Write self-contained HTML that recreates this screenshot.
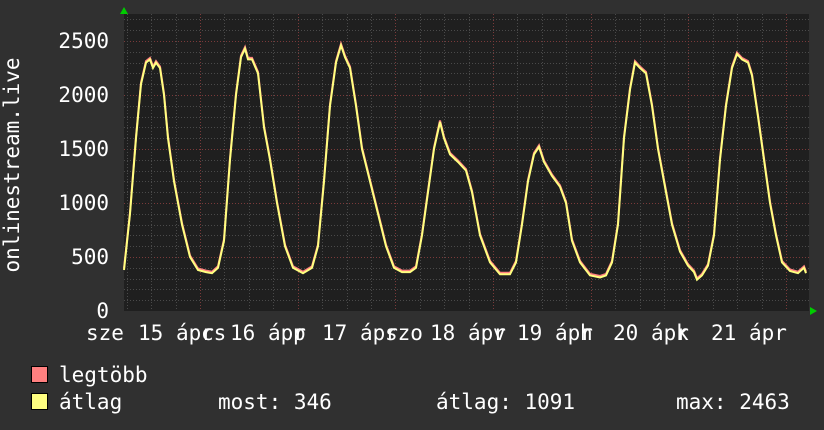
<!DOCTYPE html>
<html><head><meta charset="utf-8"><style>
html,body{margin:0;padding:0;background:#303030;}
svg{display:block}
text{font-family:"DejaVu Sans Mono","Liberation Mono",monospace;font-size:21px;fill:#fff}
</style></head><body>
<svg id="s" width="824" height="430" xmlns="http://www.w3.org/2000/svg">
<rect width="824" height="430" fill="#303030"/>
<rect x="124" y="14" width="685" height="297" fill="#1f1f1f"/>
<g id="grid"></g>
<polygon points="120,14 128,14 124,7" fill="#00cc00"/>
<polygon points="810,307 810,315 817,311" fill="#00cc00"/>
<g text-anchor="end">
<text x="109" y="48">2500</text>
<text x="109" y="102">2000</text>
<text x="109" y="156">1500</text>
<text x="109" y="210">1000</text>
<text x="109" y="264">500</text>
<text x="109" y="318">0</text>
</g>
<text transform="translate(19,165) rotate(-90)" text-anchor="middle">onlinestream.live</text>
<g id="xl"></g>
<rect x="31.5" y="366.5" width="16" height="16" fill="#ff8080" stroke="#000"/>
<rect x="31.5" y="393.5" width="16" height="16" fill="#ffff80" stroke="#000"/>
<text x="59" y="382">legtöbb</text>
<text x="59" y="409">átlag</text>
<text x="218" y="409">most: 346</text>
<text x="436" y="409">átlag: 1091</text>
<text x="676" y="409">max: 2463</text>
<polyline id="p1" fill="none" stroke="#ff8080" stroke-width="2"/>
<polyline id="p2" fill="none" stroke="#ffff80" stroke-width="2"/>
</svg>
<script>
var NS="http://www.w3.org/2000/svg",g=document.getElementById('grid');
function ln(x1,y1,x2,y2,c){var l=document.createElementNS(NS,'line');l.setAttribute('x1',x1);l.setAttribute('y1',y1);l.setAttribute('x2',x2);l.setAttribute('y2',y2);l.setAttribute('stroke',c);l.setAttribute('stroke-width',1);l.setAttribute('stroke-dasharray','1,2');g.appendChild(l);}
for(var v=100;v<=2700;v+=100){var y=Math.round(311-v*0.108)+0.5;ln(124,y,809,y,v%500==0?'#7a3a3a':'#4a4a4a');}
for(var k=-3;k<30;k++){var x=200+k*24.42;if(x<125||x>808)continue;x=Math.round(x)+0.5;ln(x,14,x,311,k%4==0?'#7a3a3a':'#4a4a4a');}
var pts=[[124,380],[130,900],[136,1600],[141,2100],[146,2300],[150,2330],[153,2250],[156,2300],[160,2250],[164,2000],[168,1600],[174,1200],[182,800],[190,500],[198,380],[206,360],[212,350],[218,400],[224,650],[230,1400],[236,2000],[241,2350],[245,2430],[248,2330],[252,2330],[258,2200],[264,1700],[270,1400],[277,1000],[285,600],[293,400],[303,350],[312,400],[318,600],[324,1200],[330,1900],[336,2300],[341,2460],[345,2350],[350,2250],[356,1900],[362,1500],[370,1200],[378,900],[386,600],[394,400],[402,360],[410,360],[416,400],[422,700],[428,1100],[434,1500],[440,1750],[444,1600],[450,1450],[458,1380],[466,1300],[472,1100],[480,700],[490,450],[500,340],[510,340],[516,450],[522,800],[528,1200],[534,1450],[539,1520],[544,1380],[552,1250],[560,1150],[566,1000],[572,650],[580,450],[590,330],[600,310],[606,330],[612,450],[618,800],[624,1600],[630,2050],[635,2300],[640,2250],[646,2200],[652,1900],[658,1500],[664,1200],[672,800],[680,550],[688,420],[694,360],[697,290],[702,330],[708,420],[714,700],[720,1400],[726,1900],[732,2250],[737,2380],[742,2330],[748,2300],[752,2180],[758,1800],[764,1400],[770,1000],[776,700],[782,450],[790,370],[798,350],[804,400],[806,350]];
var a=[],b=[];pts.forEach(function(p){var y=311-p[1]*0.108;a.push(p[0]+','+(y-1.5).toFixed(1));b.push(p[0]+','+y.toFixed(1));});
document.getElementById('p1').setAttribute('points',a.join(' '));
document.getElementById('p2').setAttribute('points',b.join(' '));
var xl=document.getElementById('xl');
function t(x,s){var e=document.createElementNS(NS,'text');e.setAttribute('x',x);e.setAttribute('y',340);e.textContent=s;xl.appendChild(e);}
t(86,'sze');
var d=[['15',138],['16',230],['17',322],['18',430],['19',517],['20',613],['21',711]];
var nm=['cs','p','szo','v','h','k'];
d.forEach(function(e,i){t(e[1],e[0]);t(e[1]+38,'ápr');if(i<nm.length)t(e[1]+38+25,nm[i]);});
</script>
</body></html>
